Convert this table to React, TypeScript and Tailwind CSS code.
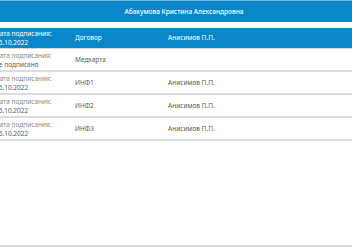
const rows = [
  { date: "не подписано", doc: "Медкарта", signer: "" },
  { date: "05.10.2022", doc: "ИНФ1", signer: "Анисимов П.П." },
  { date: "05.10.2022", doc: "ИНФ2", signer: "Анисимов П.П." },
  { date: "05.10.2022", doc: "ИНФ3", signer: "Анисимов П.П." },
];

function Row({
  date,
  doc,
  signer,
  head,
}: {
  date: string;
  doc: string;
  signer: string;
  head?: boolean;
}) {
  return (
    <div
      className={
        head
          ? "flex h-[21px] items-center bg-[#0a87c8] text-white border-b border-[#d8d8d8]"
          : "flex h-[23px] items-center border-b-2 border-[#dcdcdc] text-[#5a5a5a]"
      }
    >
      <div className="w-[80px] shrink-0 leading-[9px]">
        <div className={head ? "" : "text-[#8a8a8a]"}>Дата подписания:</div>
        <div>{date}</div>
      </div>
      <div className="w-[93px] shrink-0">{doc}</div>
      <div className="flex-1">{signer}</div>
    </div>
  );
}

export default function App() {
  return (
    <div
      className="h-[248px] w-[352px] overflow-hidden bg-white text-[6.5px]"
      style={{ fontFamily: "'Noto Sans', sans-serif" }}
    >
      <div className="flex h-[22px] items-center justify-center border-t border-[#6bbbe6] bg-[#0a87c8] pl-[16px] text-[6.5px] font-medium text-white">
        Абакумова Кристина Александровна
      </div>
      <div className="mt-[6px] -ml-[5px] w-[357px]">
        <Row head date="05.10.2022" doc="Договор" signer="Анисимов П.П." />
        {rows.map((r) => (
          <Row key={r.doc} {...r} />
        ))}
      </div>
      <div className="mt-[104px] h-[2px] bg-[#d8d8d8]" />
    </div>
  );
}
